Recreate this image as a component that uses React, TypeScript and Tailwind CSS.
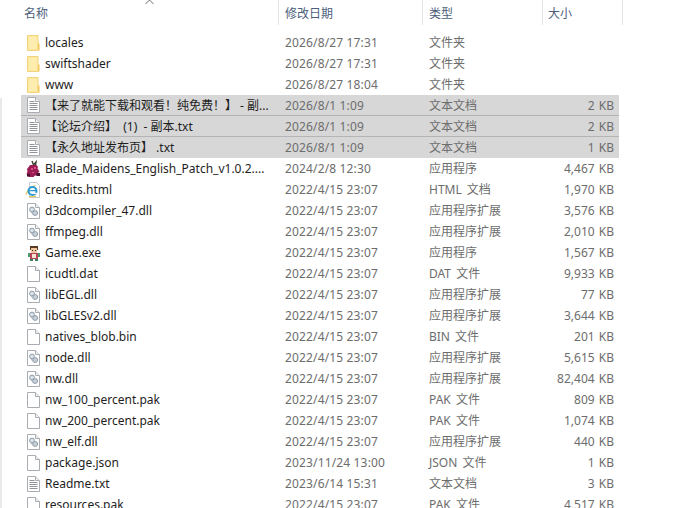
type IconKind = 'folder' | 'text' | 'blank' | 'dll' | 'ie' | 'apple' | 'game'

type FileRow = {
  icon: IconKind
  name: string
  date: string
  type: string
  size?: string
  selected?: boolean
  divider?: boolean
}

const rows: FileRow[] = [
  { icon: 'folder', name: 'locales', date: '2026/8/27 17:31', type: '文件夹' },
  { icon: 'folder', name: 'swiftshader', date: '2026/8/27 17:31', type: '文件夹' },
  { icon: 'folder', name: 'www', date: '2026/8/27 18:04', type: '文件夹' },
  { icon: 'text', name: '【来了就能下载和观看！纯免费！】 - 副...', date: '2026/8/1 1:09', type: '文本文档', size: '2 KB', selected: true, divider: true },
  { icon: 'text', name: '【论坛介绍】  (1)  - 副本.txt', date: '2026/8/1 1:09', type: '文本文档', size: '2 KB', selected: true, divider: true },
  { icon: 'text', name: '【永久地址发布页】 .txt', date: '2026/8/1 1:09', type: '文本文档', size: '1 KB', selected: true },
  { icon: 'apple', name: 'Blade_Maidens_English_Patch_v1.0.2....', date: '2024/2/8 12:30', type: '应用程序', size: '4,467 KB' },
  { icon: 'ie', name: 'credits.html', date: '2022/4/15 23:07', type: 'HTML 文档', size: '1,970 KB' },
  { icon: 'dll', name: 'd3dcompiler_47.dll', date: '2022/4/15 23:07', type: '应用程序扩展', size: '3,576 KB' },
  { icon: 'dll', name: 'ffmpeg.dll', date: '2022/4/15 23:07', type: '应用程序扩展', size: '2,010 KB' },
  { icon: 'game', name: 'Game.exe', date: '2022/4/15 23:07', type: '应用程序', size: '1,567 KB' },
  { icon: 'blank', name: 'icudtl.dat', date: '2022/4/15 23:07', type: 'DAT 文件', size: '9,933 KB' },
  { icon: 'dll', name: 'libEGL.dll', date: '2022/4/15 23:07', type: '应用程序扩展', size: '77 KB' },
  { icon: 'dll', name: 'libGLESv2.dll', date: '2022/4/15 23:07', type: '应用程序扩展', size: '3,644 KB' },
  { icon: 'blank', name: 'natives_blob.bin', date: '2022/4/15 23:07', type: 'BIN 文件', size: '201 KB' },
  { icon: 'dll', name: 'node.dll', date: '2022/4/15 23:07', type: '应用程序扩展', size: '5,615 KB' },
  { icon: 'dll', name: 'nw.dll', date: '2022/4/15 23:07', type: '应用程序扩展', size: '82,404 KB' },
  { icon: 'blank', name: 'nw_100_percent.pak', date: '2022/4/15 23:07', type: 'PAK 文件', size: '809 KB' },
  { icon: 'blank', name: 'nw_200_percent.pak', date: '2022/4/15 23:07', type: 'PAK 文件', size: '1,074 KB' },
  { icon: 'dll', name: 'nw_elf.dll', date: '2022/4/15 23:07', type: '应用程序扩展', size: '440 KB' },
  { icon: 'blank', name: 'package.json', date: '2023/11/24 13:00', type: 'JSON 文件', size: '1 KB' },
  { icon: 'text', name: 'Readme.txt', date: '2023/6/14 15:31', type: '文本文档', size: '3 KB' },
  { icon: 'blank', name: 'resources.pak', date: '2022/4/15 23:07', type: 'PAK 文件', size: '4,517 KB' },
]

function Page() {
  return (
    <>
      <path d="M.5.5h8l4 4v11H.5z" fill="#fff" stroke="#a9adb2" />
      <path d="M8.5.5v4h4" fill="#f1f1f1" stroke="#a9adb2" />
    </>
  )
}

function FileIcon({ kind }: { kind: IconKind }) {
  if (kind === 'folder') {
    return (
      <svg width="13" height="16" viewBox="0 0 13 16" className="shrink-0">
        <path d="M.5.5h10.5v15H.5z" fill="#ffe99d" stroke="#f2d27c" />
        <path d="M11 8.5h1.5v7H11z" fill="#f5c75a" />
        <path d="M2 2h8v12H2z" fill="#ffedb0" />
      </svg>
    )
  }
  if (kind === 'text') {
    return (
      <svg width="13" height="16" viewBox="0 0 13 16" className="shrink-0">
        <Page />
        <path d="M2.5 4.5h5M2.5 6.5h8M2.5 8.5h8M2.5 10.5h8M2.5 12.5h8" stroke="#8f9297" />
      </svg>
    )
  }
  if (kind === 'blank') {
    return (
      <svg width="13" height="16" viewBox="0 0 13 16" className="shrink-0">
        <Page />
      </svg>
    )
  }
  if (kind === 'dll') {
    return (
      <svg width="13" height="16" viewBox="0 0 13 16" className="shrink-0">
        <Page />
        <circle cx="5" cy="6.5" r="2.4" fill="#dbe3ea" stroke="#8d9aa6" />
        <circle cx="8.2" cy="10" r="2.4" fill="#c8d2da" stroke="#8d9aa6" />
        <path d="M3.5 8.5l3.5 4" stroke="#a9b3bc" />
      </svg>
    )
  }
  if (kind === 'ie') {
    return (
      <svg width="16" height="16" viewBox="0 0 16 16" className="ml-[-2px] mr-[-1px] shrink-0">
        <path d="M4.5.5h7l3 3v12h-10z" fill="#fff" stroke="#c3c6ca" />
        <path d="M1 12.5C3 7 7 4 10.5 3.5M11 14c-1 .6-5 .8-7 .5" fill="none" stroke="#e8c34a" strokeWidth="1.2" />
        <circle cx="7.5" cy="9" r="4" fill="none" stroke="#2a9ad6" strokeWidth="2" />
        <path d="M4.5 8.6h6.5" stroke="#2a9ad6" strokeWidth="1.3" />
        <path d="M8.5 11.4h3.2" stroke="#fff" strokeWidth="1.4" />
      </svg>
    )
  }
  if (kind === 'apple') {
    return (
      <svg width="14" height="17" viewBox="0 0 14 17" className="ml-[-1px] shrink-0">
        <path d="M6 1l1.5 4L10 2 9.5 6" fill="none" stroke="#37402a" strokeWidth="1.4" />
        <path d="M4 5h6l2 1.5-.5 2 2 3-1.5 1.5 1 2.5H9l-1.5 1.5H3L.5 14l1-2.5L1 9l2-2.5z" fill="#9c1c55" />
        <path d="M5 8h2v2H5zM8 7h2v2H8zM6 12h2v1H6z" fill="#d9537f" />
        <path d="M1 14h3v2.5H1zM10.5 13H14v3h-3.5z" fill="#44102c" />
      </svg>
    )
  }
  return (
    <svg width="14" height="16" viewBox="0 0 14 16" className="mr-[-1px] shrink-0" shapeRendering="crispEdges">
      <path d="M3 1h8v4H3z" fill="#5b3a24" />
      <path d="M4 3h6v5H4z" fill="#eec6a0" />
      <path d="M5 5h1v1H5zM8 5h1v1H8z" fill="#33231a" />
      <path d="M3 8h8v6H3z" fill="#b5455a" />
      <path d="M1 8h2v4H1zM11 8h2v4h-2z" fill="#4e9a6a" />
      <path d="M5 9h4v4H5z" fill="#f3e7d2" />
      <path d="M3 14h3v2H3zM8 14h3v2H8z" fill="#3c7f59" />
    </svg>
  )
}

const headers = [
  { label: '名称', cell: 'w-[258px] pl-[3px]' },
  { label: '修改日期', cell: 'w-[144px] pl-[6px]' },
  { label: '类型', cell: 'w-[120px] pl-[6px]' },
  { label: '大小', cell: 'w-[80px] pl-[5px]' },
]

export default function App() {
  return (
    <div className="flex h-[508px] w-[674px] overflow-hidden bg-white font-['Noto_Sans','Noto_Sans_CJK_SC',sans-serif] text-[12px]">
      <div className="mt-[98px] w-[2px] shrink-0 bg-[#e9e9e9]" />
      <div className="relative ml-[19px] flex-1">
        {/* sort caret pokes in from the top of the name column */}
        <svg width="9" height="4" viewBox="0 0 9 4" className="absolute left-[124px] top-0">
          <path d="M.5 4L4.5 0l4 4" fill="none" stroke="#6f6f6f" />
        </svg>
        <div className="flex h-[25px] text-[#4c607a]">
          {headers.map((h) => (
            <div key={h.label} className={`${h.cell} border-r border-[#e5e5e5] pt-[2px] leading-[24px]`}>
              {h.label}
            </div>
          ))}
        </div>
        <div className="mt-[7px] w-[598px]">
          {rows.map((row) => (
            <div
              key={row.name}
              className={`flex h-[21px] items-center whitespace-pre leading-[21px] text-[#6d6d6d] ${
                row.selected ? 'bg-[#d7d7d7]' : ''
              } ${row.divider ? 'border-b border-[#b4b4b4]' : ''}`}
            >
              <div className="flex w-[24px] shrink-0 pl-[6px]">
                <FileIcon kind={row.icon} />
              </div>
              <div className="w-[240px] shrink-0 overflow-hidden text-[#1e1e1e]">{row.name}</div>
              <div className="w-[144px] shrink-0 tracking-[0.15px]">{row.date}</div>
              <div className="w-[100px] shrink-0 [word-spacing:2px]">{row.type}</div>
              <div className="w-[85px] shrink-0 text-right [word-spacing:1px]">{row.size}</div>
            </div>
          ))}
        </div>
      </div>
    </div>
  )
}
